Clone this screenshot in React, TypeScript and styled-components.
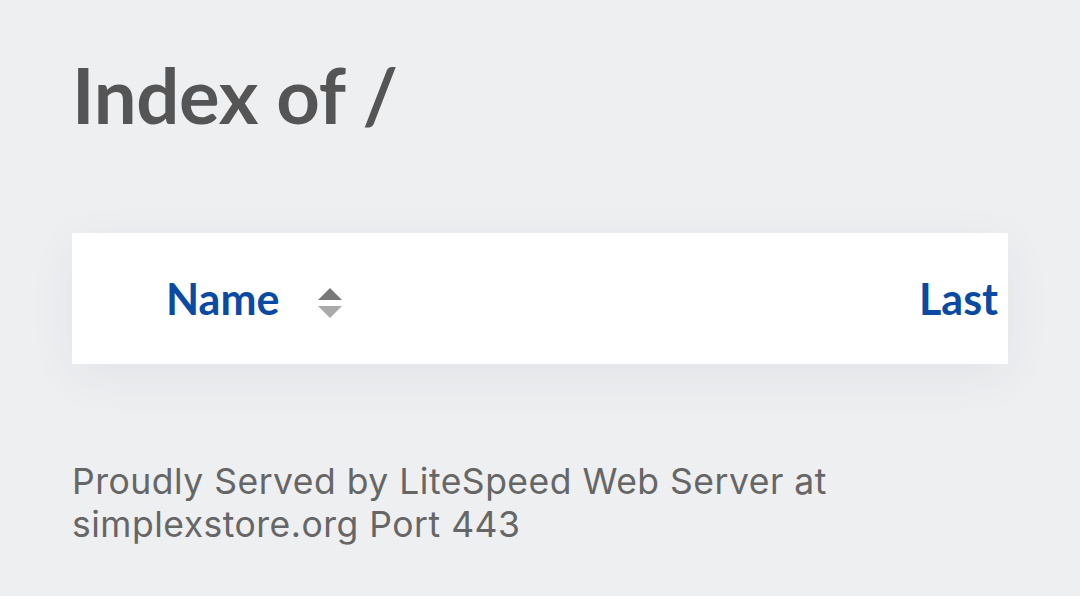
import React from "react";
import styled, { createGlobalStyle } from "styled-components";

const Global = createGlobalStyle`
  html, body {
    margin: 0;
    padding: 0;
    background: #eeeff1;
  }
  body {
    font-family: "Lato", "Noto Sans", sans-serif;
    width: 1080px;
    height: 596px;
    overflow: hidden;
  }
`;

const Page = styled.main`
  display: flex;
  flex-direction: column;
  padding: 0 72px;
`;

const Title = styled.h1`
  margin: 52px 0 0;
  font-size: 76px;
  line-height: 86px;
  font-weight: 700;
  color: #555555;
  letter-spacing: -0.3px;
`;

const Card = styled.div`
  margin-top: 95px;
  width: 936px;
  height: 131px;
  background: #ffffff;
  overflow: hidden;
  box-shadow: 0 12px 48px rgba(40, 50, 70, 0.06);
`;

const Table = styled.table`
  border-collapse: collapse;
  table-layout: fixed;
  width: 936px;
`;

const HeadCell = styled.th<{ $pad: number; $w: number }>`
  height: 131px;
  width: ${(p) => p.$w}px;
  padding: 0 0 0 ${(p) => p.$pad}px;
  text-align: left;
  white-space: nowrap;
  font-size: 43px;
  font-weight: 700;
  color: #0b4aa2;
  box-sizing: border-box;
`;

const HeadInner = styled.span`
  display: inline-flex;
  align-items: center;
  gap: 38px;
`;

const SortIcon = styled.svg`
  width: 26px;
  height: 32px;
  display: block;
  margin-top: 8px;
`;

const Footer = styled.address`
  margin-top: 96px;
  font-family: "Inter", "Noto Sans", sans-serif;
  font-style: normal;
  font-size: 35.5px;
  line-height: 43px;
  letter-spacing: 0.5px;
  color: #666666;
  width: 900px;
`;

const FooterLine = styled.span`
  display: block;
  white-space: nowrap;
`;

export default function App() {
  return (
    <>
      <Global />
      <Page>
        <Title>Index of /</Title>
        <Card>
          <Table>
            <thead>
              <tr>
                <HeadCell $pad={94} $w={847}>
                  <HeadInner>
                    Name
                    <SortIcon viewBox="0 0 26 32">
                      <polygon points="1,13 13,1 25,13" fill="#777777" />
                      <polygon points="1,19 13,31 25,19" fill="#aaaaaa" />
                    </SortIcon>
                  </HeadInner>
                </HeadCell>
                <HeadCell $pad={0} $w={89}>Last</HeadCell>
              </tr>
            </thead>
          </Table>
        </Card>
        <Footer>
          <FooterLine>Proudly Served by LiteSpeed Web Server at</FooterLine>
          <FooterLine>simplexstore.org Port 443</FooterLine>
        </Footer>
      </Page>
    </>
  );
}
